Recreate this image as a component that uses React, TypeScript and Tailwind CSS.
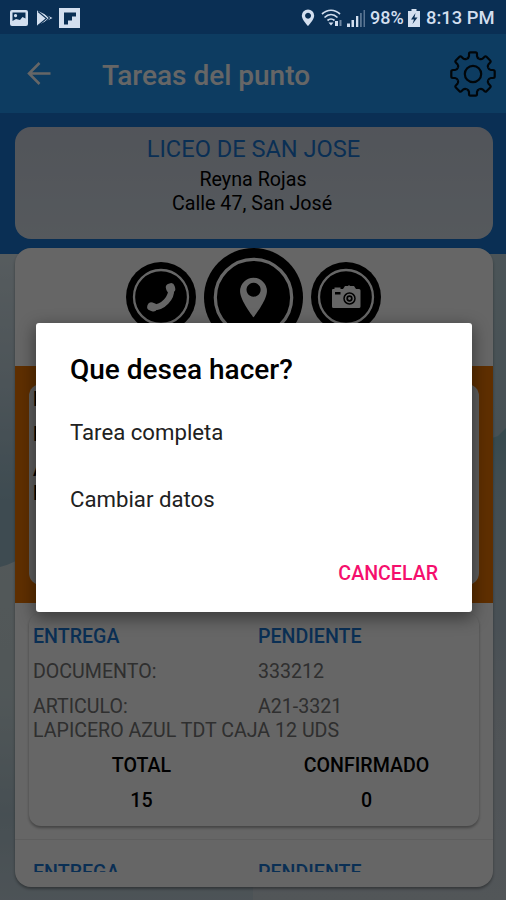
import { FC, ReactNode } from "react";

type TaskProps = {
    document: string
    article: string
    description: string
    total: number
    confirmed: number
}

const task: TaskProps = {
    document: "333212",
    article: "A21-3321",
    description: "LAPICERO AZUL TDT CAJA 12 UDS",
    total: 15,
    confirmed: 0,
}

const StatusBar: FC = () => {
    return (
        <div className="relative z-20 flex items-center justify-between h-[34px] shrink-0 bg-[#0a2f54] pl-[10px] pr-[10px] pt-px text-[#d3dfef]">
            <svg width="70" height="22" viewBox="0 0 70 22" fill="currentColor">
                <path fillRule="evenodd" d="M2 3h14a2 2 0 0 1 2 2v12a2 2 0 0 1-2 2H2a2 2 0 0 1-2-2V5a2 2 0 0 1 2-2zM2.500 5.500v8.500l3.500-2 4 1 2.500-3 3 1.500V5.500zM5.500 7a1.600 1.600 0 1 0 .1 0z" />
                <path d="M27 3.500v15L42.500 11z" />
                <path d="M28 4.500l8.500 7-8.500 7M34 5.500L39.500 11 34 16.500" stroke="#0a2f54" strokeWidth="1.100" fill="none" />
                <path fillRule="evenodd" d="M49 1h21v20H49zM54 5.500v12h4v-4h4v-4h4v-4z" />
            </svg>
            <div className="flex items-center">
                <svg width="66" height="22" viewBox="0 0 66 22" fill="currentColor">
                    <path fillRule="evenodd" d="M7 2.500a6.200 6.200 0 0 1 6.200 6.200C13.200 12.500 7 19 7 19S.8 12.500.8 8.700A6.200 6.200 0 0 1 7 2.500zM7 5.700a3 3 0 1 0 .1 0z" />
                    <g fill="none" stroke="currentColor" strokeWidth="1.700">
                        <path d="M21 7c5.500-5 12.500-5 18 0M23.500 10.500c4-3.800 9-3.800 13 0M26.500 13.500c2-1.800 5-1.800 7 0" />
                    </g>
                    <path d="M27.500 15.500h5l-2.500 3zM34 14h3v5h-3z" />
                    <path d="M38.500 13h2v6h-2z" opacity=".5" />
                    <path d="M46 16.500h3V20h-3zM50.500 13h2.500v7h-2.500zM55 9h2.300v11H55z" />
                    <path d="M59 6h1.800v14H59zM62.500 3h1.500v17h-1.500z" opacity=".4" />
                </svg>
                <span className="w-[36px] pt-px ml-[3px] text-[18px] font-medium leading-none whitespace-nowrap">98%</span>
                <svg className="ml-[2px]" width="12" height="20" viewBox="0 0 12 20">
                    <path d="M3.500 1h5v2H12v16H0V3h3.500z" fill="currentColor" />
                    <path d="M7.500 5L3 11.500h3L4.500 16l5-6.500h-3z" fill="#0a2f54" />
                </svg>
                <span className="w-[70px] pt-px ml-[6px] text-[18.400px] font-medium leading-none whitespace-nowrap">8:13 PM</span>
            </div>
        </div>
    )
}

const teeth = [0, 45, 90, 135, 180, 225, 270, 315]

const Header: FC = () => {
    return (
        <div className="relative flex items-center h-[79px] shrink-0 bg-[#2196f3] pl-[27px] pr-[10px] text-white">
            <svg width="24" height="24" viewBox="0 0 24 24" fill="none" stroke="currentColor" strokeWidth="2.500">
                <path d="M23.500 11.500H2M12.500 1L2 11.500 12.500 22" />
            </svg>
            <h1 className="flex-1 pt-[5px] ml-[51px] text-[28px] font-medium leading-none">Tareas del punto</h1>
            <svg width="46" height="46" viewBox="-23 -23 46 46" fill="none" stroke="#000" strokeOpacity=".9" strokeWidth="2.200">
                {teeth.map((angle) => (
                    <path
                        key={angle}
                        transform={`rotate(${angle})`}
                        d="M-6.300-15.200Q-4.300-15.800-4-18V-20Q-4-21.700-2.600-21.700H2.600Q4-21.700 4-20V-18Q4.300-15.800 6.300-15.200"
                    />
                ))}
                <circle r="8.200" />
            </svg>
        </div>
    )
}

const Clouds: FC = () => {
    return (
        <svg className="absolute inset-0" width="506" height="900" viewBox="0 0 506 900">
            <defs>
                <linearGradient id="left" x1="0" y1="254" x2="0" y2="500" gradientUnits="userSpaceOnUse">
                    <stop offset="0" stopColor="#d8e6ec" />
                    <stop offset=".5" stopColor="#c0d3dd" />
                    <stop offset="1" stopColor="#9cbccb" />
                </linearGradient>
                <linearGradient id="leftLow" x1="0" y1="560" x2="0" y2="900" gradientUnits="userSpaceOnUse">
                    <stop offset="0" stopColor="#cfdcdf" />
                    <stop offset=".4" stopColor="#c9d9dc" />
                    <stop offset=".75" stopColor="#b0c5cf" />
                    <stop offset="1" stopColor="#c0d0d9" />
                </linearGradient>
                <linearGradient id="right" x1="0" y1="254" x2="0" y2="440" gradientUnits="userSpaceOnUse">
                    <stop offset="0" stopColor="#bcd3db" />
                    <stop offset="1" stopColor="#b0c8d2" />
                </linearGradient>
                <linearGradient id="rightLow" x1="0" y1="430" x2="0" y2="900" gradientUnits="userSpaceOnUse">
                    <stop offset="0" stopColor="#86b8c3" />
                    <stop offset=".12" stopColor="#a3bfca" />
                    <stop offset=".4" stopColor="#b5c8d4" />
                    <stop offset=".6" stopColor="#c6d0d8" />
                    <stop offset="1" stopColor="#ccd6dd" />
                </linearGradient>
            </defs>
            <path d="M0 254h253v646H0z" fill="url(#left)" />
            <path d="M0 567Q8 565 16 561H253V900H0z" fill="url(#leftLow)" />
            <path d="M253 254h253v646H253z" fill="url(#right)" />
            <path d="M253 438h239l6-2 8-8v472H253z" fill="url(#rightLow)" />
        </svg>
    )
}

type RoundButtonProps = {
    size: string
    children: ReactNode
}

const RoundButton: FC<RoundButtonProps> = ({ size, children }) => {
    return (
        <svg className={size} viewBox="0 0 70 70" fill="#fff">
            <circle cx="35" cy="35" r="35" fill="#000" />
            <circle cx="35" cy="35" r="27" fill="none" stroke="#fff" strokeWidth="2.300" />
            {children}
        </svg>
    )
}

const Actions: FC = () => {
    return (
        <div className="flex items-start justify-center h-[118px] gap-[8px] pr-[1px] shrink-0">
            <div className="pt-[14px]">
                <RoundButton size="w-[70px] h-[70px]">
                    <path d="M45 27C46 36 37 45.500 27 45.500" fill="none" stroke="#fff" strokeWidth="6" />
                    <rect x="40" y="21.500" width="9" height="9.500" rx="4" transform="rotate(-18 44 26)" />
                    <rect x="21.500" y="40.500" width="10" height="8.500" rx="4" transform="rotate(18 26 44)" />
                </RoundButton>
            </div>
            <RoundButton size="w-[99px] h-[99px]">
                <path fillRule="evenodd" d="M35 21a9.500 9.500 0 0 1 9.500 9.500C44.500 37 35 49 35 49s-9.500-12-9.500-18.500A9.500 9.500 0 0 1 35 21zM35 24.500a5 5 0 1 0 .1 0z" />
            </RoundButton>
            <div className="pt-[14px]">
                <RoundButton size="w-[70px] h-[70px]">
                    <path d="M22 27h1.500v-1.500h6V27H32l2-3h3l1-1 1 1h4l2 3h3a1.500 1.500 0 0 1 1.500 1.500V44.500A1.500 1.500 0 0 1 48 46H22.500A1.500 1.500 0 0 1 21 44.500V28a1 1 0 0 1 1-1z" />
                    <path d="M24 30h5.500v2.500H24z" fill="#000" />
                    <circle cx="38.500" cy="36.500" r="5.500" fill="none" stroke="#000" strokeWidth="1.500" />
                    <circle cx="38.500" cy="36.500" r="2.300" fill="none" stroke="#000" strokeWidth="1.700" />
                </RoundButton>
            </div>
        </div>
    )
}

const TaskHeading: FC = () => {
    return (
        <div className="grid grid-cols-[225px_1fr] px-[4px] font-medium text-[#1976d2]">
            <span>ENTREGA</span>
            <span>PENDIENTE</span>
        </div>
    )
}

const TaskCard: FC<{ task: TaskProps }> = ({ task }) => {
    return (
        <div className="h-[213px] mx-[14px] pt-[12px] rounded-xl shadow-[0_2px_3px_rgba(0,0,0,0.35)] text-[19.600px] leading-[24px] text-[#757575]">
            <TaskHeading />
            <div className="grid grid-cols-[225px_1fr] px-[4px] mt-[11px]">
                <span>DOCUMENTO:</span>
                <span>{task.document}</span>
            </div>
            <div className="grid grid-cols-[225px_1fr] px-[4px] mt-[11px]">
                <span>ARTICULO:</span>
                <span>{task.article}</span>
            </div>
            <p className="px-[4px]">{task.description}</p>
            <div className="grid grid-cols-2 mt-[11px] font-medium text-center text-black">
                <span>TOTAL</span>
                <span>CONFIRMADO</span>
                <span className="mt-[11px]">{task.total}</span>
                <span className="mt-[11px]">{task.confirmed}</span>
            </div>
        </div>
    )
}

const Dialog: FC = () => {
    return (
        <div className="absolute inset-0 z-10 bg-black/60">
            <div className="flex flex-col w-[436px] h-[289px] mt-[323px] ml-[36px] px-[34px] bg-white rounded-[3px] shadow-[0_5px_16px_2px_rgba(0,0,0,0.4)] text-[#212121]">
                <h2 className="mt-[31px] text-[28px] leading-[32px] font-medium text-black">Que desea hacer?</h2>
                <button className="mt-[32px] text-left text-[22.200px] leading-[28px]">Tarea completa</button>
                <button className="mt-[39px] text-left text-[22.200px] leading-[28px]">Cambiar datos</button>
                <button className="self-end mt-[49px] text-[19.600px] leading-[24px] font-medium text-[#f50f6d]">CANCELAR</button>
            </div>
        </div>
    )
}

const App: FC = () => {
    return (
        <div className="relative flex flex-col w-[506px] h-[900px] overflow-hidden font-['Roboto',sans-serif]">
            <Clouds />
            <StatusBar />
            <Header />
            <div className="relative h-[141px] shrink-0 bg-[#1976d2] pl-[15px] pr-[13px] pt-[14px]">
                <div className="h-[112px] pt-[7px] rounded-2xl bg-gradient-to-b from-[#ccd3e0] to-[#d6dfe8] text-center text-[19.700px] leading-[24px]">
                    <h2 className="pr-[1px] text-[23.600px] leading-[31px] text-[#1976d2]">LICEO DE SAN JOSE</h2>
                    <p className="mt-[3px] pr-[2px]">Reyna Rojas</p>
                    <p className="pr-[4px]">Calle 47, San José</p>
                </div>
            </div>
            <div className="relative flex flex-col h-[639px] ml-[15px] mr-[13px] -mt-[6px] shrink-0 bg-white rounded-2xl shadow-[0_2px_3px_rgba(0,0,0,0.35)]">
                <Actions />
                <div className="h-[237px] shrink-0 bg-[#ee7700] px-[14px] py-[18px]">
                    <div className="h-full px-[4px] pt-[4px] bg-[#ececec] rounded-xl text-[19.700px] leading-[24px] font-medium">
                        <p>ENTREGA</p>
                        <p className="mt-[11px]">DOCUMENTO:</p>
                        <p className="mt-[11px]">ARTICULO:</p>
                        <p>LAPICERO</p>
                    </div>
                </div>
                <div className="h-[269px] pt-[10px] overflow-hidden">
                    <TaskCard task={task} />
                    <div className="mt-[13px] pt-[21px] px-[14px] border-t border-[#ececec] text-[19.600px] leading-[24px]">
                        <TaskHeading />
                    </div>
                </div>
            </div>
            <Dialog />
        </div>
    )
}

export default App;
